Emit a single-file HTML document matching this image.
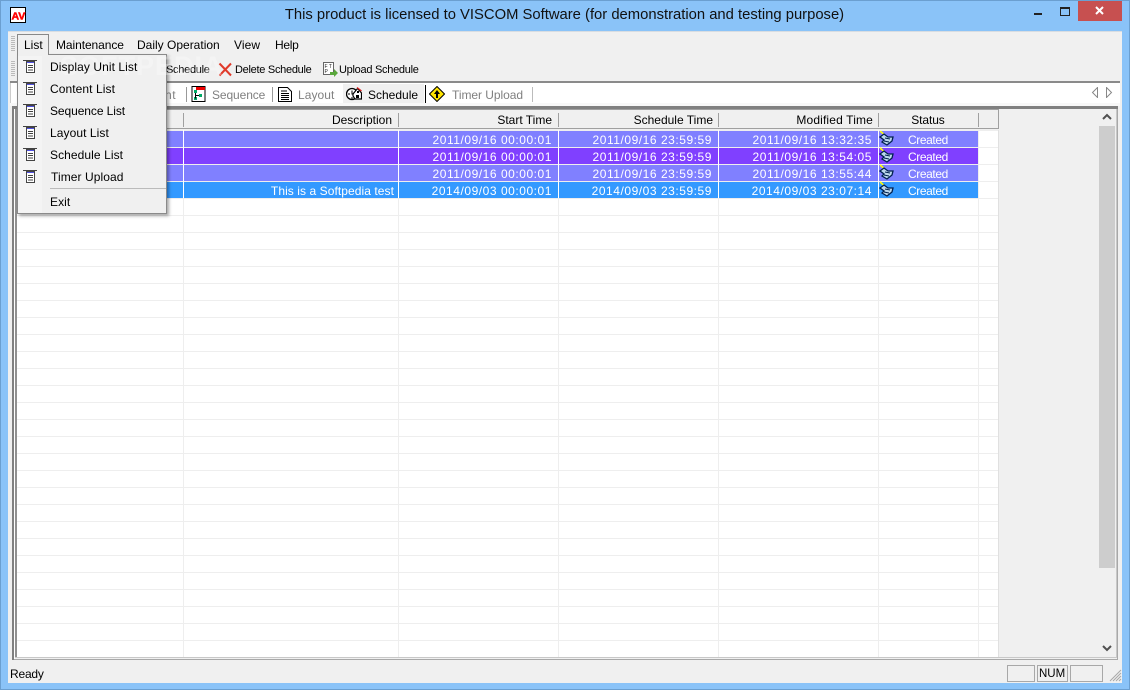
<!DOCTYPE html>
<html><head><meta charset="utf-8">
<style>
*{box-sizing:border-box}
html,body{margin:0;padding:0}
body{width:1130px;height:690px;overflow:hidden;position:relative;background:#8ac3f8;font:12px "Liberation Sans",sans-serif;color:#000}
.a{position:absolute}
.t{position:absolute;white-space:pre;line-height:14px;height:14px}
.r{text-align:right}
.w{color:#fff}
.g{color:#808080}
.mi{letter-spacing:.08px}
.d{letter-spacing:.54px}
.c{letter-spacing:-.4px}
.tb{font-size:11px;top:63px;letter-spacing:-.28px}
.vl{position:absolute;top:130px;height:527px;width:1px;background:#eee}
</style></head><body>
<div class="a" style="left:0;top:0;width:1130px;height:690px;border:1px solid #6b9fd0"></div>
<svg class="a" style="left:10px;top:7px" width="16" height="16"><rect x=".5" y=".5" width="15" height="15" fill="#fff" stroke="#000"/><text x="1.500" y="12.500" font-size="10.500" font-weight="bold" font-family="Liberation Sans" fill="#f00" stroke="#f00" stroke-width=".5">AV</text></svg>
<div class="t" style="left:0;top:7px;width:1129px;text-align:center;font-size:14.8px;line-height:17px;height:17px;color:#111">This product is licensed to VISCOM Software (for demonstration and testing purpose)</div>
<div class="a" style="left:1034px;top:13px;width:8px;height:2px;background:#222"></div>
<div class="a" style="left:1060px;top:7px;width:10px;height:9px;border:1px solid #222;border-top-width:2px"></div>
<div class="a" style="left:1078px;top:1px;width:44px;height:20px;background:#c75050"></div>
<svg class="a" style="left:1095px;top:6px" width="10" height="10"><path d="M1 1L8 8M8 1L1 8" stroke="#fff" stroke-width="2"/></svg>

<div class="a" style="left:8px;top:31px;width:1114px;height:652px;background:#f0f0f0;border-top:1px solid #d8dde2"></div>
<div class="a" style="left:11px;top:36px;width:4px;height:16px;background:repeating-linear-gradient(#bbb 0 1px,#f0f0f0 1px 2px)"></div>
<div class="a" style="left:11px;top:61px;width:4px;height:16px;background:repeating-linear-gradient(#bbb 0 1px,#f0f0f0 1px 2px)"></div>

<div class="a" style="left:17px;top:34px;width:32px;height:21px;border:1px solid #888;border-bottom:0;background:#f0f0f0;z-index:6"></div>
<div class="t" style="left:24px;top:38px;z-index:7">List</div>
<div class="t" style="left:56px;top:38px;letter-spacing:-.08px">Maintenance</div>
<div class="t" style="left:137px;top:38px">Daily Operation</div>
<div class="t" style="left:234px;top:38px;letter-spacing:.1px">View</div>
<div class="t" style="left:275px;top:38px;letter-spacing:-.3px">Help</div>

<div class="t tb" style="left:166px">Schedule</div>
<svg class="a" style="left:218px;top:62px" width="15" height="15"><path d="M1.500 1.500L13 13.500M13 1.500L1.500 13.500" stroke="#e03a2a" stroke-width="2"/></svg>
<div class="t tb" style="left:235px">Delete Schedule</div>
<svg class="a" style="left:323px;top:62px" width="16" height="15"><rect x=".5" y=".5" width="10" height="12" fill="#fff" stroke="#666"/><text x="1.500" y="6" font-size="5" font-family="Liberation Sans" fill="#222">F T</text><text x="1.500" y="11" font-size="5" font-family="Liberation Sans" fill="#222">P</text><path d="M7 10h4V7l4 4-4 4v-2H7z" fill="#5aa83c"/></svg>
<div class="t tb" style="left:339px">Upload Schedule</div>

<div class="a" style="left:10px;top:81px;width:1110px;height:2px;background:#8a8a8a"></div>
<div class="a" style="left:10px;top:83px;width:1110px;height:20px;background:#fff"></div>
<div class="a" style="left:10px;top:83px;width:1px;height:20px;background:#ccc"></div>

<div class="t g" style="left:165px;top:88px;letter-spacing:.6px">nt</div>
<div class="a" style="left:186px;top:87px;width:1px;height:15px;background:#999"></div>
<svg class="a" style="left:191px;top:86px" width="15" height="16"><path d="M1 .5H14V15.500H1z" fill="#fff" stroke="#000"/><rect x="5" y="1" width="9" height="3" fill="#e00"/><path d="M3 4h3v3H3zM8 8h3v3H8zM3 11h3v3H3z" fill="#0a6"/><path d="M4.500 7V12.500M4.500 9.500H8" stroke="#000" fill="none"/></svg>
<div class="t g" style="left:212px;top:88px;letter-spacing:-.1px">Sequence</div>
<div class="a" style="left:272px;top:87px;width:1px;height:15px;background:#999"></div>
<svg class="a" style="left:278px;top:87px" width="14" height="15"><path d="M.5 .5H9.500L13.500 4.500V14.500H.5z" fill="#fff" stroke="#000"/><path d="M3 4H9M3 6.500H11M3 8.500H11M3 10.500H11M3 12.500H11" stroke="#000"/></svg>
<div class="t g" style="left:298px;top:88px;letter-spacing:.05px">Layout</div>
<div class="a" style="left:343px;top:84px;width:81px;height:19px;background:#f0f0f0"></div>
<svg class="a" style="left:346px;top:86px" width="16" height="15"><circle cx="6" cy="8" r="5.500" fill="#fff" stroke="#000" stroke-width="1.300"/><path d="M6 4.500V8H9M2 8H4M6 11V13" stroke="#000" fill="none"/><path d="M7 8L11.500 2.500 15.500 7V13H9L7 10z" fill="#fff" stroke="#000" stroke-width="1.200"/><path d="M11 5h2v2h-2zM10 9h3v3h-3z" fill="#000"/><path d="M11 1.500L15.500 5" stroke="#d22" stroke-width="1.300"/></svg>
<div class="t" style="left:368px;top:88px;letter-spacing:0">Schedule</div>
<div class="a" style="left:425px;top:85px;width:1px;height:18px;background:#000"></div>
<svg class="a" style="left:429px;top:86px" width="16" height="16"><path d="M8 .5L15.500 8 8 15.500 .5 8z" fill="#ffe400" stroke="#000"/><path d="M8 4L11 8H9V12H7V8H5z" fill="#000"/></svg>
<div class="t g" style="left:452px;top:88px;letter-spacing:-.05px">Timer Upload</div>
<div class="a" style="left:532px;top:87px;width:1px;height:15px;background:#bbb"></div>
<svg class="a" style="left:1091px;top:87px" width="22" height="11"><path d="M6.500 .5V10.500L1.500 5.500z" fill="#fff" stroke="#888"/><path d="M15.500 .5V10.500L20.500 5.500z" fill="#fff" stroke="#888"/></svg>

<!-- list frame -->
<div class="a" style="left:10px;top:103px;width:1110px;height:3px;background:#f8f8f8"></div>
<div class="a" style="left:12px;top:106px;width:1106px;height:554px;background:#f0f0f0;border-right:1px solid #a8a8a8;border-bottom:1px solid #a8a8a8"></div>
<div class="a" style="left:12px;top:106px;width:1106px;height:3px;background:#808080"></div>
<div class="a" style="left:12px;top:106px;width:2px;height:554px;background:#808080"></div>
<div class="a" style="left:14px;top:109px;width:1px;height:550px;background:#fff"></div>
<div class="a" style="left:15px;top:109px;width:2px;height:548px;background:#909090"></div>
<div class="a" style="left:15px;top:657px;width:1101px;height:1px;background:#c8c8c8"></div>
<div class="a" style="left:1116px;top:109px;width:1px;height:549px;background:#c8c8c8"></div>
<div class="a" style="left:17px;top:130px;width:981px;height:527px;background:#fff;background-image:linear-gradient(#eee 1px,transparent 1px);background-size:100% 17px;background-position:0 0"></div>
<div class="vl" style="left:183px"></div><div class="vl" style="left:398px"></div><div class="vl" style="left:558px"></div><div class="vl" style="left:718px"></div><div class="vl" style="left:878px"></div><div class="vl" style="left:978px"></div><div class="vl" style="left:998px;background:#e0e0e0"></div>

<!-- header -->
<div class="a" style="left:17px;top:109px;width:982px;height:20px;background:#f0f0f0;border-top:1px solid #a0a0a0;border-bottom:1px solid #a0a0a0;border-right:1px solid #a0a0a0"></div>
<div class="a" style="left:183px;top:113px;width:1px;height:14px;background:#a0a0a0"></div>
<div class="a" style="left:398px;top:113px;width:1px;height:14px;background:#a0a0a0"></div>
<div class="a" style="left:558px;top:113px;width:1px;height:14px;background:#a0a0a0"></div>
<div class="a" style="left:718px;top:113px;width:1px;height:14px;background:#a0a0a0"></div>
<div class="a" style="left:878px;top:113px;width:1px;height:14px;background:#a0a0a0"></div>
<div class="a" style="left:978px;top:113px;width:1px;height:14px;background:#a0a0a0"></div>
<div class="t r" style="left:192px;width:200px;top:113px">Description</div>
<div class="t r" style="left:402px;width:150px;top:113px">Start Time</div>
<div class="t r" style="left:563px;width:150px;top:113px">Schedule Time</div>
<div class="t r" style="left:723px;width:150px;top:113px;letter-spacing:.15px">Modified Time</div>
<div class="t" style="left:878px;width:100px;top:113px;text-align:center;letter-spacing:-.1px">Status</div>

<!-- rows -->
<div class="a" style="left:17px;top:131px;width:961px;height:16px;background:#8080ff"></div>
<div class="a" style="left:17px;top:148px;width:961px;height:16px;background:#8040ff"></div>
<div class="a" style="left:17px;top:165px;width:961px;height:16px;background:#8080ff"></div>
<div class="a" style="left:17px;top:182px;width:961px;height:16px;background:#3399ff"></div>
<div class="a" style="left:183px;top:130px;width:1px;height:68px;background:#fff"></div>
<div class="a" style="left:398px;top:130px;width:1px;height:68px;background:#fff"></div>
<div class="a" style="left:558px;top:130px;width:1px;height:68px;background:#fff"></div>
<div class="a" style="left:718px;top:130px;width:1px;height:68px;background:#fff"></div>
<div class="a" style="left:878px;top:130px;width:1px;height:68px;background:#fff"></div>

<div class="t r w d" style="left:403px;width:149px;top:133px">2011/09/16 00:00:01</div>
<div class="t r w d" style="left:563px;width:149px;top:133px">2011/09/16 23:59:59</div>
<div class="t r w d" style="left:723px;width:149px;top:133px">2011/09/16 13:32:35</div>
<div class="t w c" style="left:908px;top:133px">Created</div>
<div class="t r w d" style="left:403px;width:149px;top:150px">2011/09/16 00:00:01</div>
<div class="t r w d" style="left:563px;width:149px;top:150px">2011/09/16 23:59:59</div>
<div class="t r w d" style="left:723px;width:149px;top:150px">2011/09/16 13:54:05</div>
<div class="t w c" style="left:908px;top:150px">Created</div>
<div class="t r w d" style="left:403px;width:149px;top:167px">2011/09/16 00:00:01</div>
<div class="t r w d" style="left:563px;width:149px;top:167px">2011/09/16 23:59:59</div>
<div class="t r w d" style="left:723px;width:149px;top:167px">2011/09/16 13:55:44</div>
<div class="t w c" style="left:908px;top:167px">Created</div>
<div class="t r w" style="left:194px;width:200px;top:184px;letter-spacing:.07px">This is a Softpedia test</div>
<div class="t r w d" style="left:403px;width:149px;top:184px">2014/09/03 00:00:01</div>
<div class="t r w d" style="left:563px;width:149px;top:184px">2014/09/03 23:59:59</div>
<div class="t r w d" style="left:723px;width:149px;top:184px">2014/09/03 23:07:14</div>
<div class="t w c" style="left:908px;top:184px">Created</div>

<svg class="a" style="left:879px;top:131px" width="16" height="68">
<defs><g id="st"><path d="M1 0L7 5" stroke="#ff0" stroke-width="1.500"/><path d="M1 6L5 3 9 6 14 6 13 10 8 14 3 11 5 9z" fill="#bcd8ee" stroke="#002050" stroke-width="1.300"/><path d="M6 7L11 8M5 10L10 11" stroke="#002050"/></g></defs>
<use href="#st"/><use href="#st" y="17"/><use href="#st" y="34"/><use href="#st" y="51"/></svg>

<!-- scrollbar -->
<div class="a" style="left:1099px;top:110px;width:16px;height:546px;background:#f0f0f0"></div>
<div class="a" style="left:1099px;top:126px;width:16px;height:442px;background:#cdcdcd"></div>
<svg class="a" style="left:1102px;top:113px" width="10" height="8"><path d="M1 6L5 2 9 6" fill="none" stroke="#505050" stroke-width="2"/></svg>
<svg class="a" style="left:1102px;top:644px" width="10" height="8"><path d="M1 2L5 6 9 2" fill="none" stroke="#505050" stroke-width="2"/></svg>

<!-- status bar -->
<div class="t" style="left:10px;top:667px;letter-spacing:-.2px">Ready</div>
<div class="a" style="left:1007px;top:665px;width:28px;height:17px;border:1px solid #a8a8a8"></div>
<div class="a" style="left:1037px;top:665px;width:31px;height:17px;border:1px solid #a8a8a8"></div>
<div class="t" style="left:1039px;top:667px;font-size:11.500px">NUM</div>
<div class="a" style="left:1070px;top:665px;width:33px;height:17px;border:1px solid #a8a8a8"></div>
<svg class="a" style="left:1109px;top:669px" width="13" height="13"><path d="M12 1L1 12M12 4L4 12M12 7L7 12M12 10L10 12" stroke="#a8a8a8"/></svg>

<!-- menu popup -->
<div class="a" style="left:17px;top:54px;width:150px;height:160px;background:#f0f0f0;border:1px solid #8a8a8a;box-shadow:2px 2px 3px rgba(0,0,0,.35);z-index:5"></div>
<div class="a" style="left:18px;top:55px;width:24px;height:158px;background:#f4f4f4;z-index:5"></div>
<div class="a" style="left:18px;top:54px;width:30px;height:2px;background:#f0f0f0;z-index:5"></div>
<div class="a" style="left:50px;top:188px;width:116px;height:1px;background:#bbb;z-index:5"></div>
<svg class="a" style="left:22px;top:58px;z-index:5" width="16" height="130">
<defs><g id="mi"><path d="M1 2.500H15" stroke="#444"/><path d="M4.500 3.500H12.500V14.500H4.500z" fill="#fff" stroke="#444"/><path d="M5 4.500H12" stroke="#5050e0"/><path d="M6 7.500H11M6 9.500H11M6 12H11" stroke="#444"/></g></defs>
<use href="#mi"/><use href="#mi" y="22"/><use href="#mi" y="44"/><use href="#mi" y="66"/><use href="#mi" y="88"/><use href="#mi" y="110"/></svg>
<div class="t" style="left:60px;top:52px;height:28px;line-height:28px;font-size:27px;font-weight:bold;letter-spacing:1px;color:rgba(255,255,255,.3);z-index:5">SOFTPEDIA</div>
<div class="t mi" style="left:50px;top:60px;z-index:6">Display Unit List</div>
<div class="t mi" style="left:50px;top:82px;z-index:6">Content List</div>
<div class="t" style="left:50px;top:104px;z-index:6;letter-spacing:-.08px">Sequence List</div>
<div class="t mi" style="left:50px;top:126px;z-index:6">Layout List</div>
<div class="t mi" style="left:50px;top:148px;z-index:6">Schedule List</div>
<div class="t mi" style="left:51px;top:170px;z-index:6">Timer Upload</div>
<div class="t mi" style="left:50px;top:195px;z-index:6">Exit</div>
</body></html>
